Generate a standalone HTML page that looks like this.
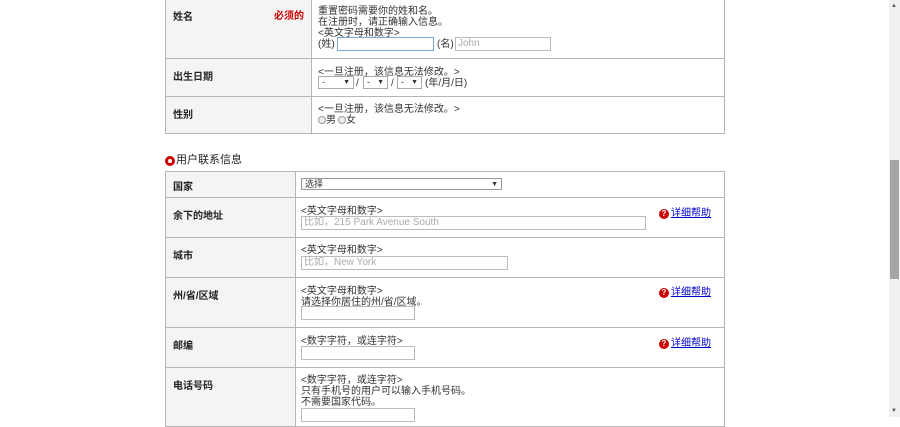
<!DOCTYPE html>
<html><head><meta charset="utf-8"><style>
*{box-sizing:border-box;margin:0;padding:0}
body{width:900px;height:417px;overflow:hidden;background:#fff;font-family:"Liberation Sans","Noto Sans CJK SC",sans-serif;font-size:10px;color:#333;position:relative}
.a{position:absolute}
.cell{position:absolute;border:1px solid #b5b5b5}
.l{background:#f4f4f4;font-weight:bold;color:#222;padding:9px 7px;font-size:10px}
.r{background:#fff}
.t{position:absolute;line-height:11px;white-space:nowrap}
.in{position:absolute;border:1px solid #bbb;height:14px;background:#fff;color:#aaa;font-size:10px;line-height:12px;padding-left:2px}
.sel{position:absolute;border:1px solid #aaa;height:13px;background:#fff;font-size:9px;line-height:11px;padding-left:3px}
.sel:after{content:"▼";position:absolute;right:3px;top:0;font-size:7px}
.help{position:absolute;color:#00c;text-decoration:underline;font-size:10px;white-space:nowrap}
.help:before{content:"?";display:inline-block;width:10px;height:10px;border-radius:50%;background:#c00;color:#fff;font-size:8px;line-height:10px;text-align:center;font-weight:bold;margin-right:2px;text-decoration:none}
.rad{display:inline-block;width:8px;height:8px;border-radius:50%;border:1px solid #999;background:#eee;vertical-align:-1px}
</style></head><body>
<div class="cell l" style="left:165px;top:-2px;width:147px;height:61px">姓名<span class="a" style="right:7px;top:8px;color:#c00;">必须的</span></div>
<div class="cell r" style="left:311px;top:-2px;width:414px;height:61px"></div>
<div class="t" style="left:318px;top:6px">重置密码需要你的姓和名。<br>在注册时，请正确输入信息。<br>&lt;英文字母和数字&gt;</div>
<div class="t" style="left:318px;top:39px">(姓)</div>
<div class="in" style="left:337px;top:37px;width:97px;border-color:#7aa7d8"></div>
<div class="t" style="left:437px;top:39px">(名)</div>
<div class="in" style="left:455px;top:37px;width:96px">John</div>
<div class="cell l" style="left:165px;top:58px;width:147px;height:39px">出生日期</div>
<div class="cell r" style="left:311px;top:58px;width:414px;height:39px"></div>
<div class="t" style="left:318px;top:67px">&lt;一旦注册，该信息无法修改。&gt;</div>
<div class="sel" style="left:318px;top:76px;width:36px">-</div>
<div class="t" style="left:356px;top:78px">/</div>
<div class="sel" style="left:363px;top:76px;width:25px">-</div>
<div class="t" style="left:391px;top:78px">/</div>
<div class="sel" style="left:397px;top:76px;width:25px">-</div>
<div class="t" style="left:425px;top:78px">(年/月/日)</div>
<div class="cell l" style="left:165px;top:96px;width:147px;height:38px">性别</div>
<div class="cell r" style="left:311px;top:96px;width:414px;height:38px"></div>
<div class="t" style="left:318px;top:104px">&lt;一旦注册，该信息无法修改。&gt;</div>
<div class="t" style="left:318px;top:115px"><span class="rad"></span>男<span class="rad" style="margin-left:2px"></span>女</div>
<div class="a" style="left:165px;top:156px;width:10px;height:10px;border-radius:50%;background:#c00"><div class="a" style="left:3px;top:3px;width:4px;height:4px;border-radius:50%;background:#fff"></div></div>
<div class="t" style="left:176px;top:155px;font-size:11px;color:#222">用户联系信息</div>
<div class="cell l" style="left:165px;top:171px;width:131px;height:27px;padding-top:6px">国家</div>
<div class="cell r" style="left:295px;top:171px;width:430px;height:27px"></div>
<div class="sel" style="left:301px;top:178px;width:201px;height:12px;border-color:#999">选择</div>
<div class="cell l" style="left:165px;top:197px;width:131px;height:41px">余下的地址</div>
<div class="cell r" style="left:295px;top:197px;width:430px;height:41px"></div>
<div class="t" style="left:301px;top:206px">&lt;英文字母和数字&gt;</div>
<div class="in" style="left:301px;top:216px;width:345px">比如，215 Park Avenue South</div>
<div class="help" style="left:659px;top:204px">详细帮助</div>
<div class="cell l" style="left:165px;top:237px;width:131px;height:41px">城市</div>
<div class="cell r" style="left:295px;top:237px;width:430px;height:41px"></div>
<div class="t" style="left:301px;top:245px">&lt;英文字母和数字&gt;</div>
<div class="in" style="left:301px;top:256px;width:207px">比如，New York</div>
<div class="cell l" style="left:165px;top:277px;width:131px;height:51px">州/省/区域</div>
<div class="cell r" style="left:295px;top:277px;width:430px;height:51px"></div>
<div class="t" style="left:301px;top:286px">&lt;英文字母和数字&gt;<br>请选择你居住的州/省/区域。</div>
<div class="in" style="left:301px;top:306px;width:114px"></div>
<div class="help" style="left:659px;top:283px">详细帮助</div>
<div class="cell l" style="left:165px;top:327px;width:131px;height:41px">邮编</div>
<div class="cell r" style="left:295px;top:327px;width:430px;height:41px"></div>
<div class="t" style="left:301px;top:336px">&lt;数字字符，或连字符&gt;</div>
<div class="in" style="left:301px;top:346px;width:114px"></div>
<div class="help" style="left:659px;top:334px">详细帮助</div>
<div class="cell l" style="left:165px;top:367px;width:131px;height:60px">电话号码</div>
<div class="cell r" style="left:295px;top:367px;width:430px;height:60px"></div>
<div class="t" style="left:301px;top:375px">&lt;数字字符，或连字符&gt;<br>只有手机号的用户可以输入手机号码。<br>不需要国家代码。</div>
<div class="in" style="left:301px;top:408px;width:114px"></div>
<div class="a" style="left:889px;top:0;width:11px;height:417px;background:#f0f0f0"></div>
<div class="a" style="left:890px;top:160px;width:9px;height:119px;background:#a6a6a6"></div>
<div class="a" style="left:891px;top:3px;font-size:6px;color:#555">▲</div>
<div class="a" style="left:891px;top:408px;font-size:6px;color:#555">▼</div>
</body></html>
